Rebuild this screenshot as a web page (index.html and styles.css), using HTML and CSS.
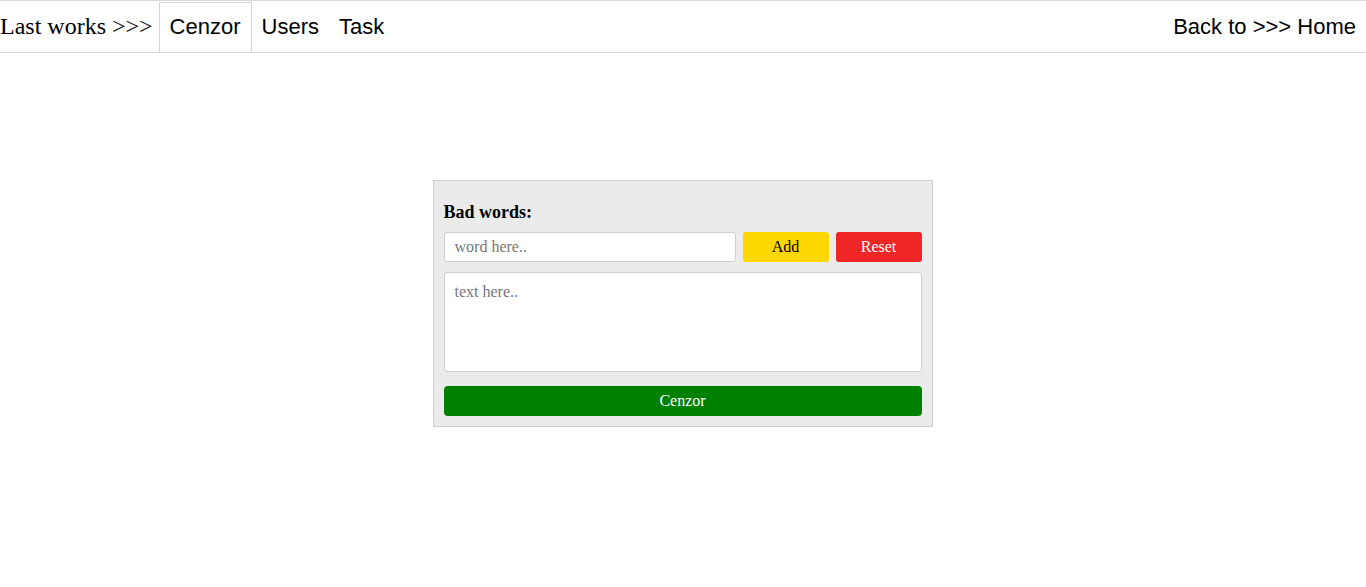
FILE: index.html
```html
<!DOCTYPE html>
<html>
<head>
<meta charset="utf-8">
<link rel="stylesheet" href="styles.css">
</head>
<body>
<nav class="nav">
  <div class="nav-left">
    <span class="brand">Last works &gt;&gt;&gt;</span>
    <a class="nav-item active">Cenzor</a>
    <a class="nav-item">Users</a>
    <a class="nav-item">Task</a>
  </div>
  <a class="nav-item home">Back to &gt;&gt;&gt; Home</a>
</nav>
<main class="main">
  <div class="panel">
    <div class="label">Bad words:</div>
    <div class="row">
      <input class="word" type="text" placeholder="word here..">
      <button class="btn btn-add">Add</button>
      <button class="btn btn-reset">Reset</button>
    </div>
    <textarea class="text" placeholder="text here.."></textarea>
    <button class="btn btn-cenzor">Cenzor</button>
  </div>
</main>
</body>
</html>
```
FILE: styles.css
```css
html, body { margin: 0; padding: 0; background: #fff; }
body { font-family: "Liberation Serif", "Times New Roman", serif; color: #000; }

.nav {
  display: flex;
  justify-content: space-between;
  align-items: stretch;
  border-top: 1px solid #d9d9d9;
  border-bottom: 1px solid #d9d9d9;
  height: 51px;
  box-sizing: content-box;
}
.nav-left { display: flex; align-items: stretch; }
.brand {
  font-family: "Liberation Serif", "Times New Roman", serif;
  font-size: 24px;
  display: flex;
  align-items: center;
  margin-right: 6px;
  padding-bottom: 1px;
}
.nav-item {
  font-family: "Liberation Sans", Arial, sans-serif;
  font-size: 22px;
  display: flex;
  align-items: center;
  padding: 1px 10px 1px;
  color: #000;
  margin-top: 1px;
}
.nav-item.active {
  border: 1px solid #d4d4d4;
  border-bottom: 0;
  padding-top: 0;
}

.main { padding-top: 127px; display: flex; justify-content: center; }
.panel {
  width: 478px;
  background: #ebebeb;
  border: 1px solid #d0d0d0;
  padding: 10px;
  margin-left: -1px;
}
.label {
  font-weight: bold;
  font-size: 18px;
  line-height: 20px;
  margin: 11px 0 10px;
}
.row { display: flex; gap: 7px; }
.word {
  flex: 1;
  height: 30px;
  box-sizing: border-box;
  border: 1px solid #cfcfcf;
  border-radius: 3px;
  padding: 0 10px;
  font-family: "Liberation Serif", serif;
  font-size: 16px;
  outline: none;
  min-width: 0;
}
.word::placeholder, .text::placeholder { color: #777; }
.btn {
  font-family: "Liberation Serif", serif;
  font-size: 16px;
  height: 30px;
  border: 0;
  border-radius: 3px;
  padding: 0;
  cursor: pointer;
}
.btn-add { width: 86px; background: #ffd700; color: #000; }
.btn-reset { width: 86px; background: #f02525; color: #fff; }
.text {
  display: block;
  width: 100%;
  height: 100px;
  box-sizing: border-box;
  margin-top: 10px;
  border: 1px solid #cfcfcf;
  border-radius: 3px;
  padding: 10px;
  font-family: "Liberation Serif", serif;
  font-size: 16px;
  resize: none;
  outline: none;
}
.btn-cenzor {
  display: block;
  width: 100%;
  margin-top: 14px;
  background: #008000;
  color: #fff;
  border-radius: 4px;
}
```
